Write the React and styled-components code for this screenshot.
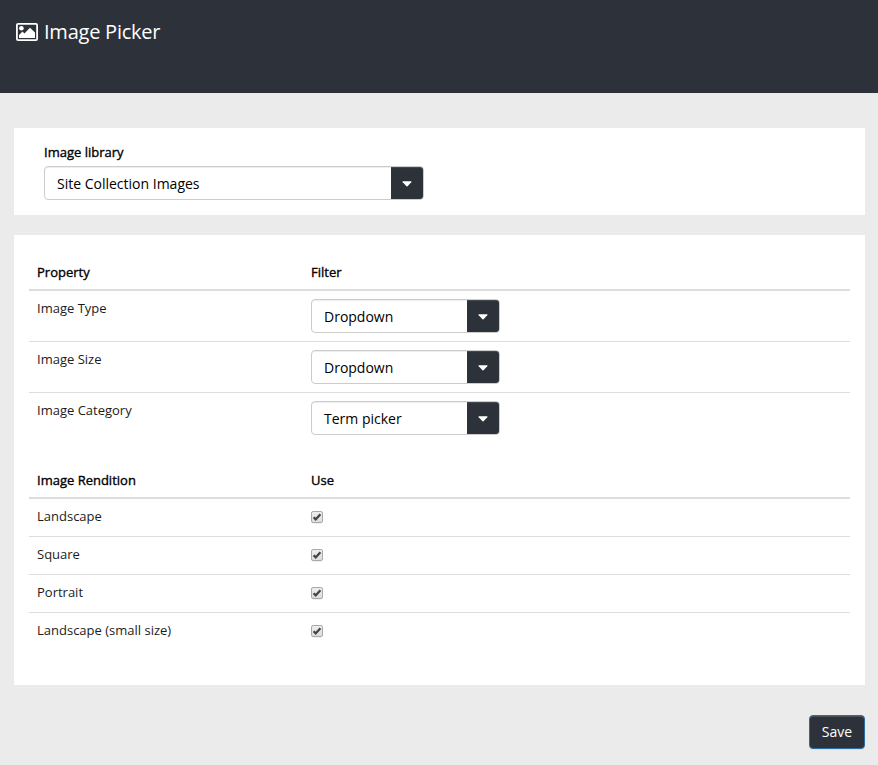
import React from "react";
import styled, { createGlobalStyle } from "styled-components";

const GlobalStyle = createGlobalStyle`
  *, *::before, *::after { box-sizing: border-box; }
  html, body { margin: 0; padding: 0; background: #ebebeb; }
  body { font: 400 13px/20px "Open Sans", "Noto Sans", sans-serif; color: #000; }
`;

const Page = styled.div`
  min-height: 765px;
  display: flex;
  flex-direction: column;
  background: #ebebeb;
`;

const Header = styled.header`
  height: 93px;
  padding: 18px 16px;
  display: flex;
  align-items: flex-start;
  gap: 6px;
  background: #2d323a;
  color: #fff;
`;

const HeaderIcon = styled.svg`
  flex: none;
  width: 22px;
  height: 18px;
  margin-top: 5px;
`;

const Title = styled.h1`
  margin: 0;
  font-size: 20px;
  line-height: 28px;
  font-weight: 400;
  letter-spacing: -0.23px;
`;

const Main = styled.main`
  padding: 35px 13px 16px 14px;
  display: flex;
  flex-direction: column;
`;

const Panel = styled.section`
  background: #fff;
  height: ${(p) => p.$height}px;
  padding: ${(p) => p.$padding};
  margin-bottom: ${(p) => p.$gap}px;
`;

const Label = styled.div`
  height: 24px;
  line-height: 20px;
  -webkit-text-stroke: 0.35px #000;
`;

const SelectBox = styled.div`
  display: flex;
  width: ${(p) => p.$width}px;
  height: 34px;
  border: 1px solid #ccc;
  border-radius: 4px;
  box-shadow: inset 0 1px 1px rgba(0, 0, 0, 0.075);
  overflow: hidden;
`;

const SelectValue = styled.span`
  flex: 1;
  padding-left: 12px;
  font-size: 14px;
  line-height: 33px;
`;

const SelectToggle = styled.span`
  width: 32px;
  padding-top: 2px;
  display: flex;
  align-items: center;
  justify-content: center;
  background: #2d323a;
  box-shadow: inset 0 1px 1px rgba(255, 255, 255, 0.12);
`;

const Table = styled.div`
  margin-bottom: ${(p) => p.$gap}px;
`;

const Row = styled.div`
  display: grid;
  grid-template-columns: 274px 1fr;
  height: ${(p) => p.$height}px;
  padding: 8px 8px 0;
  border-bottom: ${(p) => (p.$last ? 0 : 1)}px solid #ddd;
`;

const HeadRow = styled(Row)`
  border-bottom: 2px solid #ddd;
  -webkit-text-stroke: 0.35px #000;
`;

const Name = styled.span`
  line-height: 19px;
  color: #1c1c1c;
`;

const CheckIcon = styled.svg`
  display: block;
  width: 12px;
  height: 13px;
  margin-top: 4px;
`;

const SaveButton = styled.button`
  align-self: flex-end;
  width: 56px;
  height: 34px;
  padding: 0;
  border: 1px solid #2e6da4;
  border-radius: 4px;
  background: #2d323a;
  color: #fff;
  font: 400 14px/20px "Open Sans", "Noto Sans", sans-serif;
  box-shadow: inset 0 1px 0 rgba(255, 255, 255, 0.15), 0 1px 1px rgba(0, 0, 0, 0.075);
`;

const properties = [
  ["Image Type", "Dropdown"],
  ["Image Size", "Dropdown"],
  ["Image Category", "Term picker"],
];
const renditions = ["Landscape", "Square", "Portrait", "Landscape (small size)"];

function Select({ value, width }) {
  return (
    <SelectBox $width={width}>
      <SelectValue>{value}</SelectValue>
      <SelectToggle>
        <svg width="10" height="6" viewBox="0 0 10 6">
          <path d="M0.8 0.2H9.2Q9.8 0.5 9.3 1.2L5.5 5.2Q5 5.6 4.5 5.2L0.7 1.2Q0.2 0.5 0.8 0.2Z" fill="#fff" />
        </svg>
      </SelectToggle>
    </SelectBox>
  );
}

function Checkbox() {
  return (
    <CheckIcon viewBox="0 0 12 13" role="checkbox" aria-checked="true">
      <defs>
        <linearGradient id="box" x1="0" y1="0" x2="0" y2="1">
          <stop offset="0" stopColor="#eee" />
          <stop offset="1" stopColor="#dcdcdc" />
        </linearGradient>
      </defs>
      <rect x="0.5" y="1.1" width="11" height="11" rx="2" fill="none" stroke="#000" strokeOpacity="0.1" />
      <rect x="0.5" y="0.5" width="11" height="11" rx="1.6" fill="url(#box)" stroke="#a8a8a8" />
      <path d="M2.6 6.3L4.7 8.4L9.4 3.2" fill="none" stroke="#444" strokeWidth="2.3" />
    </CheckIcon>
  );
}

export default function App() {
  return (
    <Page>
      <GlobalStyle />
      <Header>
        <HeaderIcon viewBox="0 0 22 18">
          <rect x="0.9" y="0.9" width="20.2" height="16.2" rx="1.2" fill="none" stroke="#fff" strokeWidth="1.8" />
          <circle cx="5.4" cy="5.2" r="2.3" fill="#fff" />
          <path d="M3 15V12L6.5 8.6L8.4 10.5L14 4.8L19 9.6V15Z" fill="#fff" />
        </HeaderIcon>
        <Title>Image Picker</Title>
      </Header>
      <Main>
        <Panel $height={87} $padding="14px 30px" $gap={20}>
          <Label>Image library</Label>
          <Select value="Site Collection Images" width={380} />
        </Panel>
        <Panel $height={450} $padding="19px 15px" $gap={30}>
          <Table $gap={18}>
            <HeadRow $height={37}>
              <span>Property</span>
              <span>Filter</span>
            </HeadRow>
            {properties.map(([name, value], i) => (
              <Row key={name} $height={51} $last={i === properties.length - 1}>
                <Name>{name}</Name>
                <Select value={value} width={189} />
              </Row>
            ))}
          </Table>
          <Table $gap={0}>
            <HeadRow $height={37}>
              <span>Image Rendition</span>
              <span>Use</span>
            </HeadRow>
            {renditions.map((name, i) => (
              <Row key={name} $height={38} $last={i === renditions.length - 1}>
                <Name>{name}</Name>
                <Checkbox />
              </Row>
            ))}
          </Table>
        </Panel>
        <SaveButton type="button">Save</SaveButton>
      </Main>
    </Page>
  );
}
